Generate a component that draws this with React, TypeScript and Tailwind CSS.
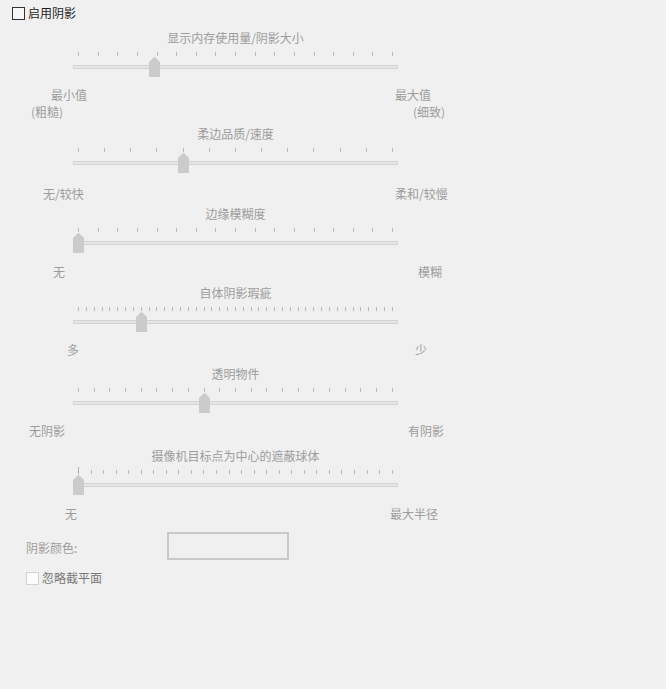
import React from "react";

interface SliderProps {
  title: string;
  titleMt: string;
  ticks: number;
  thumbX: number;
  labelMt: string;
  leftLabels: string[];
  rightLabels: string[];
  leftPad: string[];
  rightX: string[];
  tallFirst?: boolean;
}

const TRACK_X = 73;

const Thumb = () => (
  <svg width="11" height="20" viewBox="0 0 11 20" className="block">
    <path d="M0 5 L4.5 0.5 Q5.5 -0.3 6.5 0.5 L11 5 L11 20 L0 20 Z" fill="#cbcbcb" />
  </svg>
);

const Slider = ({
  title,
  titleMt,
  ticks,
  thumbX,
  labelMt,
  leftLabels,
  rightLabels,
  leftPad,
  rightX,
  tallFirst,
}: SliderProps) => {
  return (
    <div>
      <div className={`${titleMt} ml-[73px] w-[325px] h-[16px] text-center text-[#9c9c9c]`}>{title}</div>
      <div className="mt-[5px] ml-[73px] w-[325px] h-[5px] px-[5px] flex justify-between items-end">
        {Array.from({ length: ticks }).map((_, i) => (
          <div
            key={i}
            className={
              tallFirst && i === 0
                ? "w-px h-[7px] bg-[#ababab] -mt-[2px]"
                : "w-px h-[4px] bg-[#b9b9b9]"
            }
          />
        ))}
      </div>
      <div className="mt-[1px] ml-[73px] w-[325px] h-[20px] relative">
        <div className="absolute left-0 right-0 top-[8px] h-[4px] bg-[#e6e6e6] border border-[#d3d3d3]" />
        <div className="absolute top-0" style={{ left: thumbX - TRACK_X }}>
          <Thumb />
        </div>
      </div>
      {leftLabels.map((l, i) => (
        <div key={i} className={`${i === 0 ? labelMt : "mt-[1px]"} flex h-[16px] text-[#9c9c9c]`}>
          <div className={`${rightX[i]} ${leftPad[i]} shrink-0`}>{l}</div>
          <div>{rightLabels[i]}</div>
        </div>
      ))}
    </div>
  );
};

export default function App() {
  return (
    <div className="w-[666px] h-[689px] bg-[#f0f0f0] font-['Noto_Sans_CJK_SC',sans-serif] text-[12px] leading-[16px] overflow-hidden">
      <div className="pt-[5px] pl-[12px] flex items-center h-[21px]">
        <div className="w-[13px] h-[13px] border border-[#333333] bg-[#f7f7f7]" />
        <span className="ml-[3px] text-[#1e1e1e]">启用阴影</span>
      </div>

      <Slider
        title="显示内存使用量/阴影大小"
        titleMt="mt-[9px]"
        ticks={17}
        thumbX={149}
        labelMt="mt-[10px]"
        leftLabels={["最小值", "(粗糙)"]}
        rightLabels={["最大值", "(细致)"]}
        leftPad={["pl-[51px]", "pl-[31px]"]}
        rightX={["w-[395px]", "w-[413px]"]}
      />

      <Slider
        title="柔边品质/速度"
        titleMt="mt-[6px]"
        ticks={13}
        thumbX={178}
        labelMt="mt-[13px]"
        leftLabels={["无/较快"]}
        rightLabels={["柔和/较慢"]}
        leftPad={["pl-[43px]"]}
        rightX={["w-[395px]"]}
      />

      <Slider
        title="边缘模糊度"
        titleMt="mt-[4px]"
        ticks={17}
        thumbX={73}
        labelMt="mt-[11px]"
        leftLabels={["无"]}
        rightLabels={["模糊"]}
        leftPad={["pl-[53px]"]}
        rightX={["w-[418px]"]}
      />

      <Slider
        title="自体阴影瑕疵"
        titleMt="mt-[5px]"
        ticks={41}
        thumbX={136}
        labelMt="mt-[10px]"
        leftLabels={["多"]}
        rightLabels={["少"]}
        leftPad={["pl-[67px]"]}
        rightX={["w-[415px]"]}
      />

      <Slider
        title="透明物件"
        titleMt="mt-[8px]"
        ticks={21}
        thumbX={199}
        labelMt="mt-[10px]"
        leftLabels={["无阴影"]}
        rightLabels={["有阴影"]}
        leftPad={["pl-[29px]"]}
        rightX={["w-[408px]"]}
      />

      <Slider
        title="摄像机目标点为中心的遮蔽球体"
        titleMt="mt-[9px]"
        ticks={26}
        thumbX={73}
        labelMt="mt-[11px]"
        leftLabels={["无"]}
        rightLabels={["最大半径"]}
        leftPad={["pl-[65px]"]}
        rightX={["w-[390px]"]}
        tallFirst
      />

      <div className="mt-[10px] h-[28px] flex items-center">
        <span className="ml-[26px] w-[141px] pt-[3px] text-[#9c9c9c]">阴影颜色:</span>
        <div className="w-[122px] h-[28px] border-2 border-[#c8c8c8] bg-[#f0f0f0]" />
      </div>

      <div className="mt-[10px] h-[16px] flex items-center pl-[26px]">
        <div className="w-[13px] h-[13px] border border-[#d2d2d2] bg-[#fbfbfb]" />
        <span className="ml-[3px] text-[#777777]">忽略截平面</span>
      </div>
    </div>
  );
}
